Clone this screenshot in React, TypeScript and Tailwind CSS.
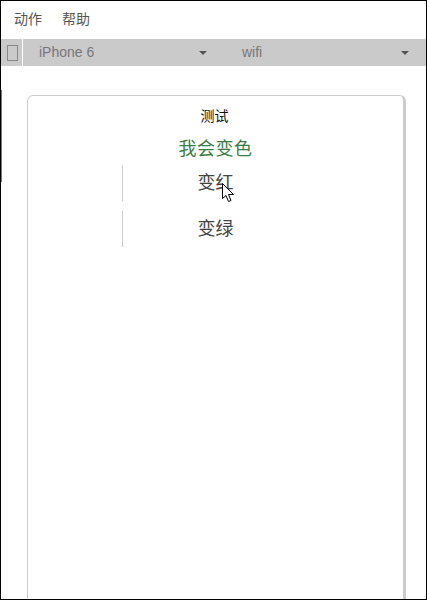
import React from 'react';

const font = { fontFamily: '"Liberation Sans", "Noto Sans CJK SC", sans-serif' };

const Caret = () => <span className="h-0 w-0 border-x-[4px] border-t-[4px] border-x-transparent border-t-[#555555]" />;

const Cursor = () => (
    <svg className="absolute left-[221px] top-[182px]" width="13" height="20" viewBox="0 0 13 20">
        <path d="M0.5 0.5 L0.5 15.5 L4 12.5 L6.5 18.5 L9 17.5 L6.5 11.5 L11.5 11.5 Z" fill="#ffffff" stroke="#000000" strokeWidth="1" />
    </svg>
);

const ActionButton: React.FC<{ label: string }> = ({ label }) => (
    <div className="relative flex h-[36px] w-full items-center justify-center">
        <span className="absolute left-[94px] top-0 h-full w-px bg-[#cccccc]" />
        <span className="pl-[2px] text-[18px] leading-none text-[#444444]">{label}</span>
    </div>
);

export default function App() {
    return (
        <div className="relative flex h-[600px] w-[427px] flex-col overflow-hidden border border-black bg-white" style={font}>
            <span className="absolute left-0 top-[89px] h-[92px] w-px bg-[#22aa33]" />
            {/* Menu */}
            <div className="flex h-[38px] shrink-0 items-center gap-[20px] pb-[1px] pl-[13px] text-[14px] text-[#555555]">
                <span>动作</span>
                <span>帮助</span>
            </div>
            {/* Toolbar */}
            <div className="flex h-[27px] shrink-0 items-stretch bg-[#cacaca] pl-px">
                <div className="flex w-[21px] items-center justify-center border-r border-white">
                    <span className="h-[16px] w-[11px] border border-[#888888]" />
                </div>
                <div className="flex w-[189px] items-center justify-between pl-[15px] pr-[5px] text-[14px] text-[#777777]">
                    <span className="pl-px">iPhone 6</span>
                    <Caret />
                </div>
                <div className="flex flex-1 items-center justify-between pl-[30px] pr-[17px] text-[14px] text-[#777777]">
                    <span>wifi</span>
                    <Caret />
                </div>
            </div>
            {/* Phone frame */}
            <div className="min-h-0 flex-1 pl-[26px] pr-[20px] pt-[29px]">
                <div className="h-[600px] rounded-t-[6px] border-l-[1px] border-r-[3px] border-t-[1px] border-[#cccccc] pt-[13px]">
                    <div className="flex flex-col items-center pr-[2px]">
                        <div className="text-[14px] leading-[15px] text-[#111111]">测试</div>
                        <div className="mt-[13px] pl-[2px] text-[18px] leading-[24px] tracking-[0.5px] text-[#3a7d44]">我会变色</div>
                        <div className="mt-[4px] flex w-full flex-col gap-[10px]">
                            <ActionButton label="变红" />
                            <ActionButton label="变绿" />
                        </div>
                    </div>
                </div>
            </div>
            <Cursor />
        </div>
    );
}
